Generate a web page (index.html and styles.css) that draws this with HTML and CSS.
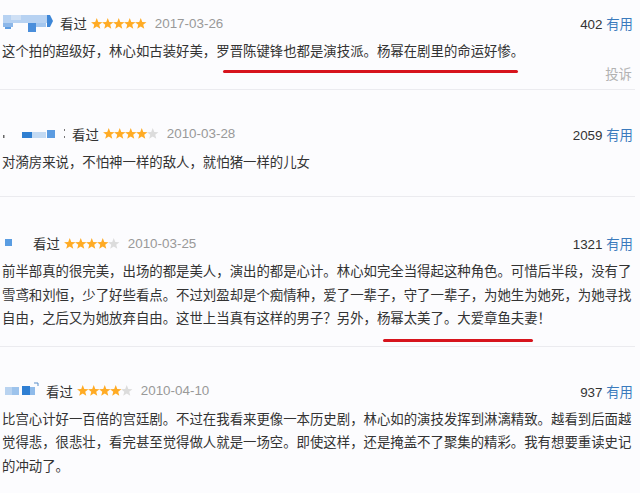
FILE: index.html
```html
<!DOCTYPE html>
<html lang="zh-CN">
<head>
  <meta charset="UTF-8">
  <title>短评</title>
  <meta name="viewport" content="width=device-width, initial-scale=1.0">
  <link rel="stylesheet" href="styles.css">
</head>
<body>

  <!-- star shapes used by every rating -->
  <svg class="defs" width="0" height="0">
    <defs>
      <polygon id="star" points="5.75,0 7.28,3.9 11.46,4.15 8.22,6.8 9.28,10.85 5.75,8.6 2.22,10.85 3.28,6.8 0.04,4.15 4.22,3.9"/>
    </defs>
  </svg>

  <div class="comment-list">

    <div class="comment first">
      <div class="comment-head">
        <svg class="avatar-blur" width="50" height="20" viewBox="0 0 50 20">
          <rect x="0" y="2" width="44" height="8" fill="#b7d2f2"/>
          <rect x="8" y="2" width="10" height="5" fill="#cfe0f5"/>
          <rect x="0" y="10" width="10" height="4" fill="#8cb7e9"/>
          <rect x="2" y="14" width="6" height="2" fill="#5e9de2"/>
          <rect x="25" y="10" width="8" height="9" fill="#4a8edb"/>
          <rect x="33" y="10" width="10" height="4" fill="#a4c7ef"/>
          <polygon points="44,2 47,2 50,8 47,14 44,14" fill="#3d86d7"/>
        </svg>
        <span class="watched">看过</span>
        <svg class="stars" width="56" height="11" viewBox="0 0 56 11">
          <use href="#star" x="0" class="on"/><use href="#star" x="11" class="on"/><use href="#star" x="22" class="on"/><use href="#star" x="33" class="on"/><use href="#star" x="44" class="on"/>
        </svg>
        <span class="date">2017-03-26</span>
        <span class="votes">402 <a class="useful">有用</a></span>
      </div>
      <p class="comment-text">这个拍的超级好，林心如古装好美，<span class="mark mark-near">罗晋陈键锋也都是演技派。杨幂在剧里的命运好惨。</span></p>
      <div class="report"><a>投诉</a></div>
    </div>

    <div class="comment tall">
      <div class="comment-head">
        <svg class="avatar-blur" width="62" height="20" viewBox="0 0 62 20">
          <rect x="0" y="11" width="1.5" height="3" fill="#666"/>
          <rect x="19" y="8" width="10" height="6" fill="#2f7fd1"/>
          <rect x="29" y="8" width="14" height="6" fill="#c3daf3"/>
          <rect x="44" y="6" width="8" height="8" fill="#5c9ce1"/>
          <rect x="61" y="5" width="1.5" height="2" fill="#777"/>
          <rect x="61" y="12" width="1.5" height="2" fill="#777"/>
        </svg>
        <span class="watched">看过</span>
        <svg class="stars" width="56" height="11" viewBox="0 0 56 11">
          <use href="#star" x="0" class="on"/><use href="#star" x="11" class="on"/><use href="#star" x="22" class="on"/><use href="#star" x="33" class="on"/><use href="#star" x="44" class="off"/>
        </svg>
        <span class="date">2010-03-28</span>
        <span class="votes">2059 <a class="useful">有用</a></span>
      </div>
      <p class="comment-text">对漪房来说，不怕神一样的敌人，就怕猪一样的儿女</p>
      <div class="report blank"><a>投诉</a></div>
    </div>

    <div class="comment roomy">
      <div class="comment-head">
        <svg class="avatar-blur" width="23" height="20" viewBox="0 0 23 20">
          <rect x="2" y="6" width="7" height="7" fill="#5a9de2"/>
        </svg>
        <span class="watched">看过</span>
        <svg class="stars" width="56" height="11" viewBox="0 0 56 11">
          <use href="#star" x="0" class="on"/><use href="#star" x="11" class="on"/><use href="#star" x="22" class="on"/><use href="#star" x="33" class="on"/><use href="#star" x="44" class="off"/>
        </svg>
        <span class="date">2010-03-25</span>
        <span class="votes">1321 <a class="useful">有用</a></span>
      </div>
      <p class="comment-text">前半部真的很完美，出场的都是美人，演出的都是心计。林心如完全当得起这种角色。可惜后半段，没有了雪鸢和刘恒，少了好些看点。不过刘盈却是个痴情种，爱了一辈子，守了一辈子，为她生为她死，为她寻找自由，之后又为她放弃自由。这世上当真有这样的男子？另外，<span class="mark mark-far">杨幂太美了。大爱章鱼夫妻！</span></p>
    </div>

    <div class="comment">
      <div class="comment-head">
        <svg class="avatar-blur" width="36" height="20" viewBox="0 0 36 20">
          <rect x="2" y="6" width="7" height="8" fill="#b9d3f0"/>
          <rect x="9" y="6" width="7" height="8" fill="#9dc3ec"/>
          <rect x="19" y="5" width="8" height="9" fill="#2f7fd3"/>
          <rect x="27" y="6" width="5" height="8" fill="#8fbbea"/>
          <polyline points="31,2 35,2 35,5" fill="none" stroke="#5b8fc9" stroke-width="1"/>
        </svg>
        <span class="watched">看过</span>
        <svg class="stars" width="56" height="11" viewBox="0 0 56 11">
          <use href="#star" x="0" class="on"/><use href="#star" x="11" class="on"/><use href="#star" x="22" class="on"/><use href="#star" x="33" class="on"/><use href="#star" x="44" class="off"/>
        </svg>
        <span class="date">2010-04-10</span>
        <span class="votes">937 <a class="useful">有用</a></span>
      </div>
      <p class="comment-text">比宫心计好一百倍的宫廷剧。不过在我看来更像一本历史剧，林心如的演技发挥到淋漓精致。越看到后面越觉得悲，很悲壮，看完甚至觉得做人就是一场空。即使这样，还是掩盖不了聚集的精彩。我有想要重读史记的冲动了。</p>
    </div>

  </div>

</body>
</html>
```

FILE: styles.css
```css
body {
  font-family: "Liberation Sans", "Noto Sans CJK SC", sans-serif;
  background: #fcfcfe;
  margin: 0;
  color: #333;
  font-size: 13.4px;
}

.defs {
  position: absolute;
}

.comment-list {
  width: 635px;
}

.comment {
  padding: 34px 0 15px 2px;
  border-bottom: 1px solid #ebebef;
}

.comment.first {
  padding-top: 13px;
  padding-bottom: 4px;
}

.comment.tall {
  padding-bottom: 1px;
}

.comment.roomy {
  padding-top: 36px;
}

.comment-head {
  display: flex;
  align-items: center;
  height: 20px;
  padding-left: 1px;
  padding-right: 2px;
}

.avatar-blur {
  display: block;
  margin-right: 7px;
}

.watched {
  color: #333;
}

.stars {
  display: block;
  margin-left: 4px;
  margin-right: 8px;
}

.stars .on {
  fill: #ffab24;
}

.stars .off {
  fill: #dcdcdc;
}

.date {
  color: #999;
}

.votes {
  margin-left: auto;
  color: #333;
}

.useful {
  color: #3b7bbd;
}

.comment-text {
  margin: 7px 0 0;
  width: 632px;
  line-height: 23.5px;
  color: #333;
}

.mark {
  position: relative;
}

.mark::after {
  content: "";
  position: absolute;
  height: 3px;
  border-radius: 2px;
  background: #d7141d;
}

.mark-near::after {
  left: 7px;
  right: 6px;
  bottom: -14px;
}

.mark-far::after {
  left: 6px;
  right: 18px;
  bottom: -16px;
}

.report {
  margin-top: 1px;
  height: 20px;
  line-height: 20px;
  text-align: right;
  padding-right: 3px;
}

.report a {
  color: #b2b2b2;
}

.report.blank {
  visibility: hidden;
}
```
